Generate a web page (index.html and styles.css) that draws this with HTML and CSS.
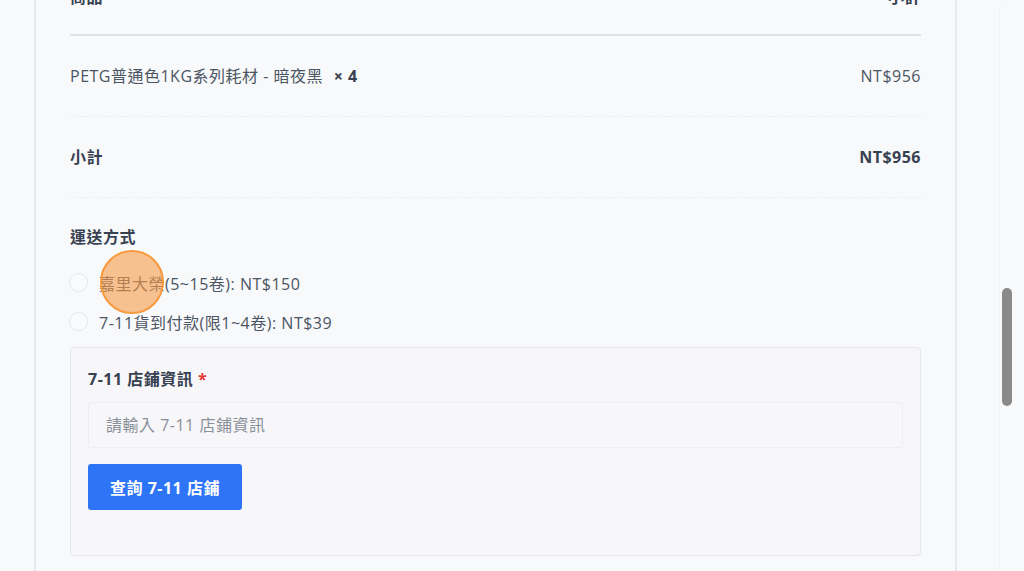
FILE: index.html
```html
<!DOCTYPE html>
<html lang="zh-Hant">
<head>
    <meta charset="UTF-8">
    <meta name="viewport" content="width=device-width, initial-scale=1.0">
    <title>結帳</title>
    <link rel="stylesheet" href="styles.css">
</head>
<body>

    <!-- Order card -->
    <section class="order-card">
        <div class="order-row order-head">
            <span>商品</span>
            <span>小計</span>
        </div>
        <div class="order-row">
            <span class="item-name">PETG普通色1KG系列耗材 - 暗夜黑 <strong class="qty">× 4</strong></span>
            <span>NT$956</span>
        </div>
        <div class="order-row order-total">
            <span>小計</span>
            <span>NT$956</span>
        </div>

        <!-- Shipping -->
        <div class="shipping">
            <h3>運送方式</h3>
            <label class="ship-option">
                <span class="radio"></span>
                <span>嘉里大榮(5~15卷): NT$150</span>
                <span class="tap-mark"></span>
            </label>
            <label class="ship-option">
                <span class="radio"></span>
                <span>7-11貨到付款(限1~4卷): NT$39</span>
            </label>

            <div class="store-box">
                <label class="store-label" for="store">7-11 店鋪資訊 <span class="req">*</span></label>
                <input type="text" id="store" placeholder="請輸入 7-11 店鋪資訊">
                <button class="store-btn">查詢 7-11 店鋪</button>
            </div>
        </div>
    </section>

    <div class="scroll-track"><div class="scroll-thumb"></div></div>

</body>
</html>
```

FILE: styles.css
```css
/* Page */
body {
    margin: 0;
    background-color: #f8f9fb;
    font-family: 'Open Sans', 'Noto Sans CJK TC', sans-serif;
    font-size: 16px;
    letter-spacing: 0.5px;
    color: #4b5563;
    overflow: hidden;
    height: 571px;
}

/* Order card */
.order-card {
    width: 851px;
    margin: -40px 0 0 34px;
    padding: 0 34px 40px;
    background-color: #f8f9fb;
    border-left: 2px solid #e6e9ee;
    border-right: 2px solid #e6e9ee;
    box-sizing: content-box;
}

.order-row {
    display: flex;
    justify-content: space-between;
    align-items: center;
    height: 80px;
    border-bottom: 1px dashed #eceef2;
    line-height: 22px;
}

.order-head {
    height: 74px;
    border-bottom: 2px solid #dfe3e8;
    font-weight: 700;
    color: #374151;
}

.qty {
    margin-left: 6px;
    color: #374151;
}

.order-total {
    font-weight: 700;
    color: #374151;
}

/* Shipping */
.shipping h3 {
    margin: 28px 0 15px;
    font-size: 16px;
    line-height: 22px;
    font-weight: 700;
    color: #374151;
}

.ship-option {
    position: relative;
    display: flex;
    align-items: center;
    gap: 11px;
    height: 39px;
    margin-left: -1px;
}

.radio {
    width: 17px;
    height: 17px;
    border: 1px solid #e5e7eb;
    border-radius: 50%;
    background-color: #fafbfc;
}

.tap-mark {
    position: absolute;
    left: 31px;
    top: -13px;
    width: 64px;
    height: 64px;
    border: 2px solid #f79a3e;
    border-radius: 50%;
    background-color: rgba(247, 154, 72, 0.6);
    box-sizing: border-box;
}

/* 7-11 store box */
.store-box {
    margin-top: 6px;
    padding: 20px 17px 45px;
    background-color: #f7f6f8;
    border: 1px solid #e5e7eb;
    border-radius: 4px;
}

.store-label {
    display: block;
    font-weight: 700;
    color: #374151;
    line-height: 22px;
}

.req {
    color: #e53935;
}

.store-box input {
    display: block;
    width: 100%;
    height: 46px;
    margin: 12px 0 16px;
    padding: 0 17px;
    border: 1px solid #eceef1;
    border-radius: 3px;
    background-color: #f7f6f8;
    font-family: inherit;
    font-size: 16px;
    letter-spacing: 0.5px;
    box-sizing: border-box;
}

.store-box input::placeholder {
    color: #8a9099;
}

.store-btn {
    height: 46px;
    padding: 0 22px;
    border: none;
    border-radius: 3px;
    background-color: #2d74f6;
    color: white;
    font-family: inherit;
    font-size: 16px;
    letter-spacing: 0.5px;
    font-weight: 700;
}

/* Fake scrollbar */
.scroll-track {
    position: fixed;
    top: 5px;
    right: 8px;
    width: 16px;
    height: 580px;
    border-left: 1px solid #f1f2f4;
    border-radius: 6px 0 0 0;
}

.scroll-thumb {
    position: absolute;
    top: 283px;
    left: 2px;
    width: 10px;
    height: 118px;
    border-radius: 5px;
    background-color: #8a8a8a;
}
```
